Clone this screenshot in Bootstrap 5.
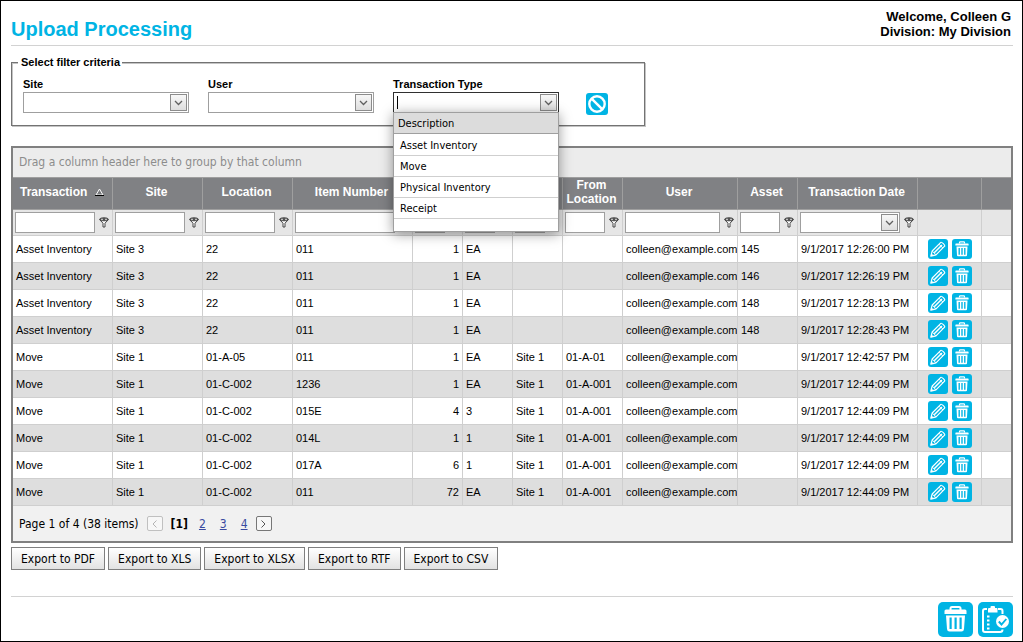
<!DOCTYPE html>
<html lang="en">
<head>
<meta charset="utf-8">
<meta name="viewport" content="width=device-width, initial-scale=1">
<title>Upload Processing</title>
<link href="https://cdn.jsdelivr.net/npm/bootstrap@5.3.0/dist/css/bootstrap.min.css" rel="stylesheet">
<style>
  :root { --brand: #00b4e4; --ui: "DejaVu Sans Condensed", "DejaVu Sans", sans-serif; --arial: "Liberation Sans", Arial, sans-serif; }
  body { font: 11px/14px var(--arial); color: #000; background: #fff; border: 1px solid #000; min-height: 100vh; padding: 0 9px 0 10px; }
  .page-head { height: 45px; border-bottom: 1px solid #d2d2d2; }
  .page-head h1 { font-size: 20px; line-height: 24px; font-weight: 700; color: var(--brand); }
  .who { font-size: 13px; line-height: 15px; font-weight: 700; padding: 8px 2px 0 0; }

  .filters { border: 1px solid #737373; box-shadow: inset 1px 1px #c4c4c4, 1px 1px #c4c4c4; width: 634px; max-width: 100%; margin-top: 9px; padding: 0 11px 10px; }
  .filters legend { float: none; width: auto; font-size: 11px; line-height: 14px; font-weight: 700; margin: 0 0 0 -5px; padding: 0 2px 0 3px; background: #fff; }
  .field { width: 166px; margin-right: 19px; }
  .field label { display: block; font-weight: 700; line-height: 14px; margin-bottom: 1px; }
  .combo { display: flex; position: relative; height: 21px; border: 1px solid #9f9f9f; background: #fff; }
  .combo select, .combo input { flex: 1 1 0; min-width: 0; width: 100%; border: 0; padding: 0 20px 0 3px; appearance: none; background: transparent; font: 11px var(--ui); outline: 0; }
  .combo input { padding: 0; }
  .caret { width: 1px; background: #000; margin: 3px 0 3px 3px; }
  .arrow { width: 17px; height: 17px; border: 1px solid #8c8c8c; background: linear-gradient(#f7f7f7, #dedede); padding: 0; display: flex; align-items: center; justify-content: center; flex: none; margin: 1px; color: #606060; }
  select + .arrow { position: absolute; right: 0; top: 0; pointer-events: none; }
  .combo.is-open { border-color: #303030; border-bottom-color: #8c8c8c; }
  .drop { position: absolute; z-index: 10; left: -1px; right: -1px; top: 19px; border: 1px solid #9f9f9f; background: #fff; box-shadow: 0 2px 12px rgba(0,0,0,.4); font: 11px/21px var(--ui); }
  .drop-head { background: #dcdcdc; border-bottom: 1px solid #9f9f9f; padding: 0 4px; height: 21px; }
  .drop ul { margin: 0; padding: 1px 0 12px; list-style: none; }
  .drop li { border-bottom: 1px solid #cfcfcf; padding: 0 6px; height: 21px; }
  .icon-btn { border: 0; padding: 0; background: transparent; display: block; line-height: 0; }
  .icon-btn svg { display: block; }

  .board { border: 2px solid #808080; margin-top: 20px; background: #f1f1f1; }
  .group-hint { background: #ececec; color: #8c8c8c; font: 12px/29px var(--ui); padding: 0 6px; height: 29px; }
  .data-grid { table-layout: fixed; width: 100%; min-width: 998px; border-collapse: separate; border-spacing: 0; }
  .data-grid th, .data-grid td { border-right: 1px solid #cfcfcf; border-bottom: 1px solid #cfcfcf; padding: 0 3px; white-space: nowrap; overflow: hidden; }
  .data-grid tr > :last-child { border-right: 0; }
  .data-grid th { background: #808184; color: #fff; border-color: #9f9f9f; border-top: 1px solid #9f9f9f; height: 32px; font-size: 12px; line-height: 14px; font-weight: 700; text-align: center; vertical-align: middle; white-space: normal; padding: 0 4px 3px 2px; }
  .data-grid .sorted { padding-left: 3px; }
  .filter-row td { background: #e6e6e6; height: 26px; padding: 0 2px; }
  .filter-box { display: flex; align-items: center; gap: 4px; }
  .filter-box > input { flex: 1 1 0; min-width: 0; height: 21px; border: 1px solid #9f9f9f; border-radius: 0; padding: 0 3px; font: 11px var(--arial); }
  .filter-box > .combo { flex: 1 1 0; min-width: 0; }
  .filter-box > .icon-btn { flex: none; margin-right: 1px; }
  .rows td { height: 27px; background: #fff; }
  .rows tr:nth-child(even) td { background: #dedede; }
  .rows td:nth-child(5) { text-align: right; }
  .acts { display: flex; gap: 4px; padding-left: 7px; }
  .pager-bar { height: 35px; font: 12px/16px var(--ui); padding: 0 6px; }
  .pager-bar a { color: #3a4aa0; text-decoration: underline; }
  .pages { display: flex; gap: 14px; padding-left: 3px; }
  .pg { width: 16px; height: 15px; border: 1px solid #777; border-radius: 2px; background: #f7f7f7; padding: 0; display: flex; align-items: center; justify-content: center; color: #555; }
  .pg:disabled { border-color: #c0c0c0; color: #b4b4b4; }
  .exports { display: flex; gap: 3px; }
  .export { height: 23px; border: 1px solid #7f7f7f; background: linear-gradient(#fff, #e2e2e2); font: 12px/16px var(--ui); color: #000; padding: 0 9px; }
  .foot { border-top: 1px solid #d2d2d2; margin-top: 26px; padding: 5px 0 4px; gap: 5px; }
</style>
</head>
<body>
<svg width="0" height="0" class="position-absolute" aria-hidden="true">
  <symbol id="funnel" viewBox="0 0 10 11"><path d="M.6 2.600 4 6.200V10h2V6.200L9.400 2.600z" fill="#fff" stroke="#444"/><ellipse cx="5" cy="2.300" rx="4.300" ry="1.700" fill="#555" stroke="#444" stroke-width=".6"/><path d="M2 2.300h2M6 2.300h2" stroke="#ddd"/></symbol>
  <symbol id="chev" viewBox="0 0 9 6"><path d="M1 1l3.500 3.500L8 1" fill="none" stroke="currentColor" stroke-width="1.300"/></symbol>
  <symbol id="edit" viewBox="0 0 20 20"><rect width="20" height="20" rx="3" fill="#00b4e4"/><g fill="none" stroke="#fff" stroke-linejoin="round"><path d="M2.800 17.200l1.400-5.200L12.800 3.400c.8-.8 4.600 3 3.800 3.800L8 15.800z" stroke-width="1.200"/><path d="M6.200 13.800l7.800-7.800" stroke-width="1.500"/><path d="M4.200 12l3.800 3.800M11 5.200l3.800 3.800"/></g><path d="M2.800 17.200l.7-2.800 2.200 2.200z" fill="#fff"/></symbol>
  <symbol id="bin" viewBox="0 0 20 20"><rect width="20" height="20" rx="3" fill="#00b4e4"/><path d="M7.500 4.500V3.600q0-.8.8-.8h3.400q.8 0 .8.800v.9" fill="none" stroke="#fff" stroke-width="1.200"/><path d="M4 4.400h12q.6 0 .6.600v1.500H3.400V5q0-.6.600-.6z" fill="#fff"/><path d="M4.500 7.600h11l-.5 8.700q0 1-1 1H6q-1 0-1-1zM6.500 9v6.800h1.400V9zm2.800 0v6.800h1.400V9zm2.800 0v6.800h1.400V9z" fill="#fff" fill-rule="evenodd"/></symbol>
</svg>

<header class="page-head d-flex justify-content-between">
  <h1 class="mb-0 mt-3">Upload Processing</h1>
  <div class="who text-end">Welcome, Colleen G<br>Division: My Division</div>
</header>

<main>
  <fieldset class="filters">
    <legend>Select filter criteria</legend>
    <div class="d-flex pt-2">
      <div class="field">
        <label for="site">Site</label>
        <div class="combo"><select id="site"><option></option></select><span class="arrow"><svg width="9" height="6"><use href="#chev"/></svg></span></div>
      </div>
      <div class="field">
        <label for="usr">User</label>
        <div class="combo"><select id="usr"><option></option></select><span class="arrow"><svg width="9" height="6"><use href="#chev"/></svg></span></div>
      </div>
      <div class="field">
        <label for="ttype">Transaction Type</label>
        <div class="combo is-open">
          <span class="caret"></span>
          <input id="ttype" type="text" role="combobox" aria-expanded="true" aria-controls="types">
          <button type="button" class="arrow" aria-label="Toggle list"><svg width="9" height="6"><use href="#chev"/></svg></button>
          <div class="drop">
            <div class="drop-head">Description</div>
            <ul id="types" role="listbox">
              <li role="option">Asset Inventory</li>
              <li role="option">Move</li>
              <li role="option">Physical Inventory</li>
              <li role="option">Receipt</li>
            </ul>
          </div>
        </div>
      </div>
      <button type="button" class="icon-btn ms-2 mt-3 align-self-start" aria-label="Clear filters"><svg width="22" height="22" viewBox="0 0 22 22"><rect width="22" height="22" rx="3" fill="#00b4e4"/><circle cx="11" cy="11" r="7.700" fill="none" stroke="#fff" stroke-width="2.400"/><path d="M5.600 5.600l10.800 10.800" stroke="#fff" stroke-width="2.400"/></svg></button>
    </div>
  </fieldset>

  <section class="board">
    <div class="group-hint">Drag a column header here to group by that column</div>
    <table class="data-grid">
      <colgroup><col style="width:100px"><col style="width:90px"><col style="width:90px"><col style="width:120px"><col style="width:50px"><col style="width:50px"><col style="width:50px"><col style="width:60px"><col style="width:115px"><col style="width:60px"><col style="width:120px"><col style="width:64px"><col></colgroup>
      <thead>
        <tr>
          <th scope="col" class="sorted"><span class="d-flex justify-content-between align-items-center ps-1 pe-1">Transaction<svg width="9" height="8" viewBox="0 0 9 8"><path d="M4.500 1L8 7H1z" fill="#77787b" stroke="#fff"/><path d="M0 7.500h9" stroke="#000"/></svg></span></th>
          <th scope="col">Site</th><th scope="col">Location</th><th scope="col">Item Number</th>
          <th scope="col" aria-label="Quantity"></th><th scope="col" aria-label="Unit"></th><th scope="col" aria-label="From site"></th>
          <th scope="col">From Location</th><th scope="col">User</th><th scope="col">Asset</th><th scope="col">Transaction Date</th><th aria-label="Actions"></th><th></th>
        </tr>
        <tr class="filter-row">
          <td><div class="filter-box"><input type="text" aria-label="Filter transaction"><button type="button" class="icon-btn" aria-label="Filter options"><svg width="10" height="11"><use href="#funnel"/></svg></button></div></td>
          <td><div class="filter-box"><input type="text" aria-label="Filter site"><button type="button" class="icon-btn" aria-label="Filter options"><svg width="10" height="11"><use href="#funnel"/></svg></button></div></td>
          <td><div class="filter-box"><input type="text" aria-label="Filter location"><button type="button" class="icon-btn" aria-label="Filter options"><svg width="10" height="11"><use href="#funnel"/></svg></button></div></td>
          <td><div class="filter-box"><input type="text" aria-label="Filter item number"><button type="button" class="icon-btn" aria-label="Filter options"><svg width="10" height="11"><use href="#funnel"/></svg></button></div></td>
          <td><div class="filter-box"><input type="text" aria-label="Filter quantity"><button type="button" class="icon-btn" aria-label="Filter options"><svg width="10" height="11"><use href="#funnel"/></svg></button></div></td>
          <td><div class="filter-box"><input type="text" aria-label="Filter unit"><button type="button" class="icon-btn" aria-label="Filter options"><svg width="10" height="11"><use href="#funnel"/></svg></button></div></td>
          <td><div class="filter-box"><input type="text" aria-label="Filter from site"><button type="button" class="icon-btn" aria-label="Filter options"><svg width="10" height="11"><use href="#funnel"/></svg></button></div></td>
          <td><div class="filter-box"><input type="text" aria-label="Filter from location"><button type="button" class="icon-btn" aria-label="Filter options"><svg width="10" height="11"><use href="#funnel"/></svg></button></div></td>
          <td><div class="filter-box"><input type="text" aria-label="Filter user"><button type="button" class="icon-btn" aria-label="Filter options"><svg width="10" height="11"><use href="#funnel"/></svg></button></div></td>
          <td><div class="filter-box"><input type="text" aria-label="Filter asset"><button type="button" class="icon-btn" aria-label="Filter options"><svg width="10" height="11"><use href="#funnel"/></svg></button></div></td>
          <td><div class="filter-box"><div class="combo"><select aria-label="Filter transaction date"><option></option></select><span class="arrow"><svg width="9" height="6"><use href="#chev"/></svg></span></div><button type="button" class="icon-btn" aria-label="Filter options"><svg width="10" height="11"><use href="#funnel"/></svg></button></div></td>
          <td></td><td></td>
        </tr>
      </thead>
      <tbody class="rows">
        <tr><td>Asset Inventory</td><td>Site 3</td><td>22</td><td>011</td><td>1</td><td>EA</td><td></td><td></td><td>colleen@example.com</td><td>145</td><td>9/1/2017 12:26:00 PM</td><td><div class="acts"><button type="button" class="icon-btn" aria-label="Edit"><svg width="20" height="20"><use href="#edit"/></svg></button><button type="button" class="icon-btn" aria-label="Delete"><svg width="20" height="20"><use href="#bin"/></svg></button></div></td><td></td></tr>
        <tr><td>Asset Inventory</td><td>Site 3</td><td>22</td><td>011</td><td>1</td><td>EA</td><td></td><td></td><td>colleen@example.com</td><td>146</td><td>9/1/2017 12:26:19 PM</td><td><div class="acts"><button type="button" class="icon-btn" aria-label="Edit"><svg width="20" height="20"><use href="#edit"/></svg></button><button type="button" class="icon-btn" aria-label="Delete"><svg width="20" height="20"><use href="#bin"/></svg></button></div></td><td></td></tr>
        <tr><td>Asset Inventory</td><td>Site 3</td><td>22</td><td>011</td><td>1</td><td>EA</td><td></td><td></td><td>colleen@example.com</td><td>148</td><td>9/1/2017 12:28:13 PM</td><td><div class="acts"><button type="button" class="icon-btn" aria-label="Edit"><svg width="20" height="20"><use href="#edit"/></svg></button><button type="button" class="icon-btn" aria-label="Delete"><svg width="20" height="20"><use href="#bin"/></svg></button></div></td><td></td></tr>
        <tr><td>Asset Inventory</td><td>Site 3</td><td>22</td><td>011</td><td>1</td><td>EA</td><td></td><td></td><td>colleen@example.com</td><td>148</td><td>9/1/2017 12:28:43 PM</td><td><div class="acts"><button type="button" class="icon-btn" aria-label="Edit"><svg width="20" height="20"><use href="#edit"/></svg></button><button type="button" class="icon-btn" aria-label="Delete"><svg width="20" height="20"><use href="#bin"/></svg></button></div></td><td></td></tr>
        <tr><td>Move</td><td>Site 1</td><td>01-A-05</td><td>011</td><td>1</td><td>EA</td><td>Site 1</td><td>01-A-01</td><td>colleen@example.com</td><td></td><td>9/1/2017 12:42:57 PM</td><td><div class="acts"><button type="button" class="icon-btn" aria-label="Edit"><svg width="20" height="20"><use href="#edit"/></svg></button><button type="button" class="icon-btn" aria-label="Delete"><svg width="20" height="20"><use href="#bin"/></svg></button></div></td><td></td></tr>
        <tr><td>Move</td><td>Site 1</td><td>01-C-002</td><td>1236</td><td>1</td><td>EA</td><td>Site 1</td><td>01-A-001</td><td>colleen@example.com</td><td></td><td>9/1/2017 12:44:09 PM</td><td><div class="acts"><button type="button" class="icon-btn" aria-label="Edit"><svg width="20" height="20"><use href="#edit"/></svg></button><button type="button" class="icon-btn" aria-label="Delete"><svg width="20" height="20"><use href="#bin"/></svg></button></div></td><td></td></tr>
        <tr><td>Move</td><td>Site 1</td><td>01-C-002</td><td>015E</td><td>4</td><td>3</td><td>Site 1</td><td>01-A-001</td><td>colleen@example.com</td><td></td><td>9/1/2017 12:44:09 PM</td><td><div class="acts"><button type="button" class="icon-btn" aria-label="Edit"><svg width="20" height="20"><use href="#edit"/></svg></button><button type="button" class="icon-btn" aria-label="Delete"><svg width="20" height="20"><use href="#bin"/></svg></button></div></td><td></td></tr>
        <tr><td>Move</td><td>Site 1</td><td>01-C-002</td><td>014L</td><td>1</td><td>1</td><td>Site 1</td><td>01-A-001</td><td>colleen@example.com</td><td></td><td>9/1/2017 12:44:09 PM</td><td><div class="acts"><button type="button" class="icon-btn" aria-label="Edit"><svg width="20" height="20"><use href="#edit"/></svg></button><button type="button" class="icon-btn" aria-label="Delete"><svg width="20" height="20"><use href="#bin"/></svg></button></div></td><td></td></tr>
        <tr><td>Move</td><td>Site 1</td><td>01-C-002</td><td>017A</td><td>6</td><td>1</td><td>Site 1</td><td>01-A-001</td><td>colleen@example.com</td><td></td><td>9/1/2017 12:44:09 PM</td><td><div class="acts"><button type="button" class="icon-btn" aria-label="Edit"><svg width="20" height="20"><use href="#edit"/></svg></button><button type="button" class="icon-btn" aria-label="Delete"><svg width="20" height="20"><use href="#bin"/></svg></button></div></td><td></td></tr>
        <tr><td>Move</td><td>Site 1</td><td>01-C-002</td><td>011</td><td>72</td><td>EA</td><td>Site 1</td><td>01-A-001</td><td>colleen@example.com</td><td></td><td>9/1/2017 12:44:09 PM</td><td><div class="acts"><button type="button" class="icon-btn" aria-label="Edit"><svg width="20" height="20"><use href="#edit"/></svg></button><button type="button" class="icon-btn" aria-label="Delete"><svg width="20" height="20"><use href="#bin"/></svg></button></div></td><td></td></tr>
      </tbody>
    </table>
    <nav class="pager-bar d-flex align-items-center gap-2" aria-label="Pages">
      <span>Page 1 of 4 (38 items)</span>
      <button type="button" class="pg" disabled aria-label="Previous page"><svg width="5" height="8" viewBox="0 0 5 8"><path d="M4.500.5L1 4l3.500 3.500" fill="none" stroke="currentColor"/></svg></button>
      <b>[1]</b>
      <span class="pages"><a href="#p2">2</a><a href="#p3">3</a><a href="#p4">4</a></span>
      <button type="button" class="pg" aria-label="Next page"><svg width="5" height="8" viewBox="0 0 5 8"><path d="M.5.5L4 4 .5 7.500" fill="none" stroke="currentColor"/></svg></button>
    </nav>
  </section>

  <div class="exports pt-1">
    <button type="button" class="export">Export to PDF</button>
    <button type="button" class="export">Export to XLS</button>
    <button type="button" class="export">Export to XLSX</button>
    <button type="button" class="export">Export to RTF</button>
    <button type="button" class="export">Export to CSV</button>
  </div>
</main>

<footer class="foot d-flex justify-content-end">
  <button type="button" class="icon-btn" aria-label="Delete all"><svg width="35" height="35" viewBox="0 0 35 35"><rect width="35" height="35" rx="5" fill="#00b4e4"/><path d="M12.500 8V6.500q0-1.500 1.500-1.500h7q1.500 0 1.500 1.500V8" fill="none" stroke="#fff" stroke-width="2"/><path d="M8 7.500h19q1.500 0 1.500 1.500v3h-22V9q0-1.500 1.500-1.500z" fill="#fff"/><path d="M8 13.500h19l-1 13.500q-.2 2.500-2.500 2.500h-12Q9.200 29.500 9 27zM11.500 15.500V27h2.200V15.500zm5 0V27h2.200V15.500zm5 0V27h2.200V15.500z" fill="#fff" fill-rule="evenodd"/></svg></button>
  <button type="button" class="icon-btn" aria-label="Process uploads"><svg width="35" height="35" viewBox="0 0 35 35"><rect width="35" height="35" rx="5" fill="#00b4e4"/><path d="M9 7H7Q5 7 5 9v19q0 2 2 2h15q2.500 0 2.500-2.500M20 7h2.500q2 0 2 2v3" fill="none" stroke="#fff" stroke-width="2"/><path d="M10 10.500V7q0-1 1-1h1.500V5q0-1 1-1h2.500q1 0 1 1v1h1.500q1 0 1 1v3.500z" fill="#fff"/><path d="M9 14.500h2.500M9 18.500h2.500M9 22.500h2.500M9 26.500h2.500" stroke="#fff" stroke-width="2"/><circle cx="24.500" cy="19.500" r="6.500" fill="#fff"/><path d="M20.800 19.500l2.700 3 4.800-5.500" fill="none" stroke="#00b4e4" stroke-width="1.900"/></svg></button>
</footer>
<script src="https://cdn.jsdelivr.net/npm/bootstrap@5.3.0/dist/js/bootstrap.bundle.min.js"></script>
</body>
</html>
